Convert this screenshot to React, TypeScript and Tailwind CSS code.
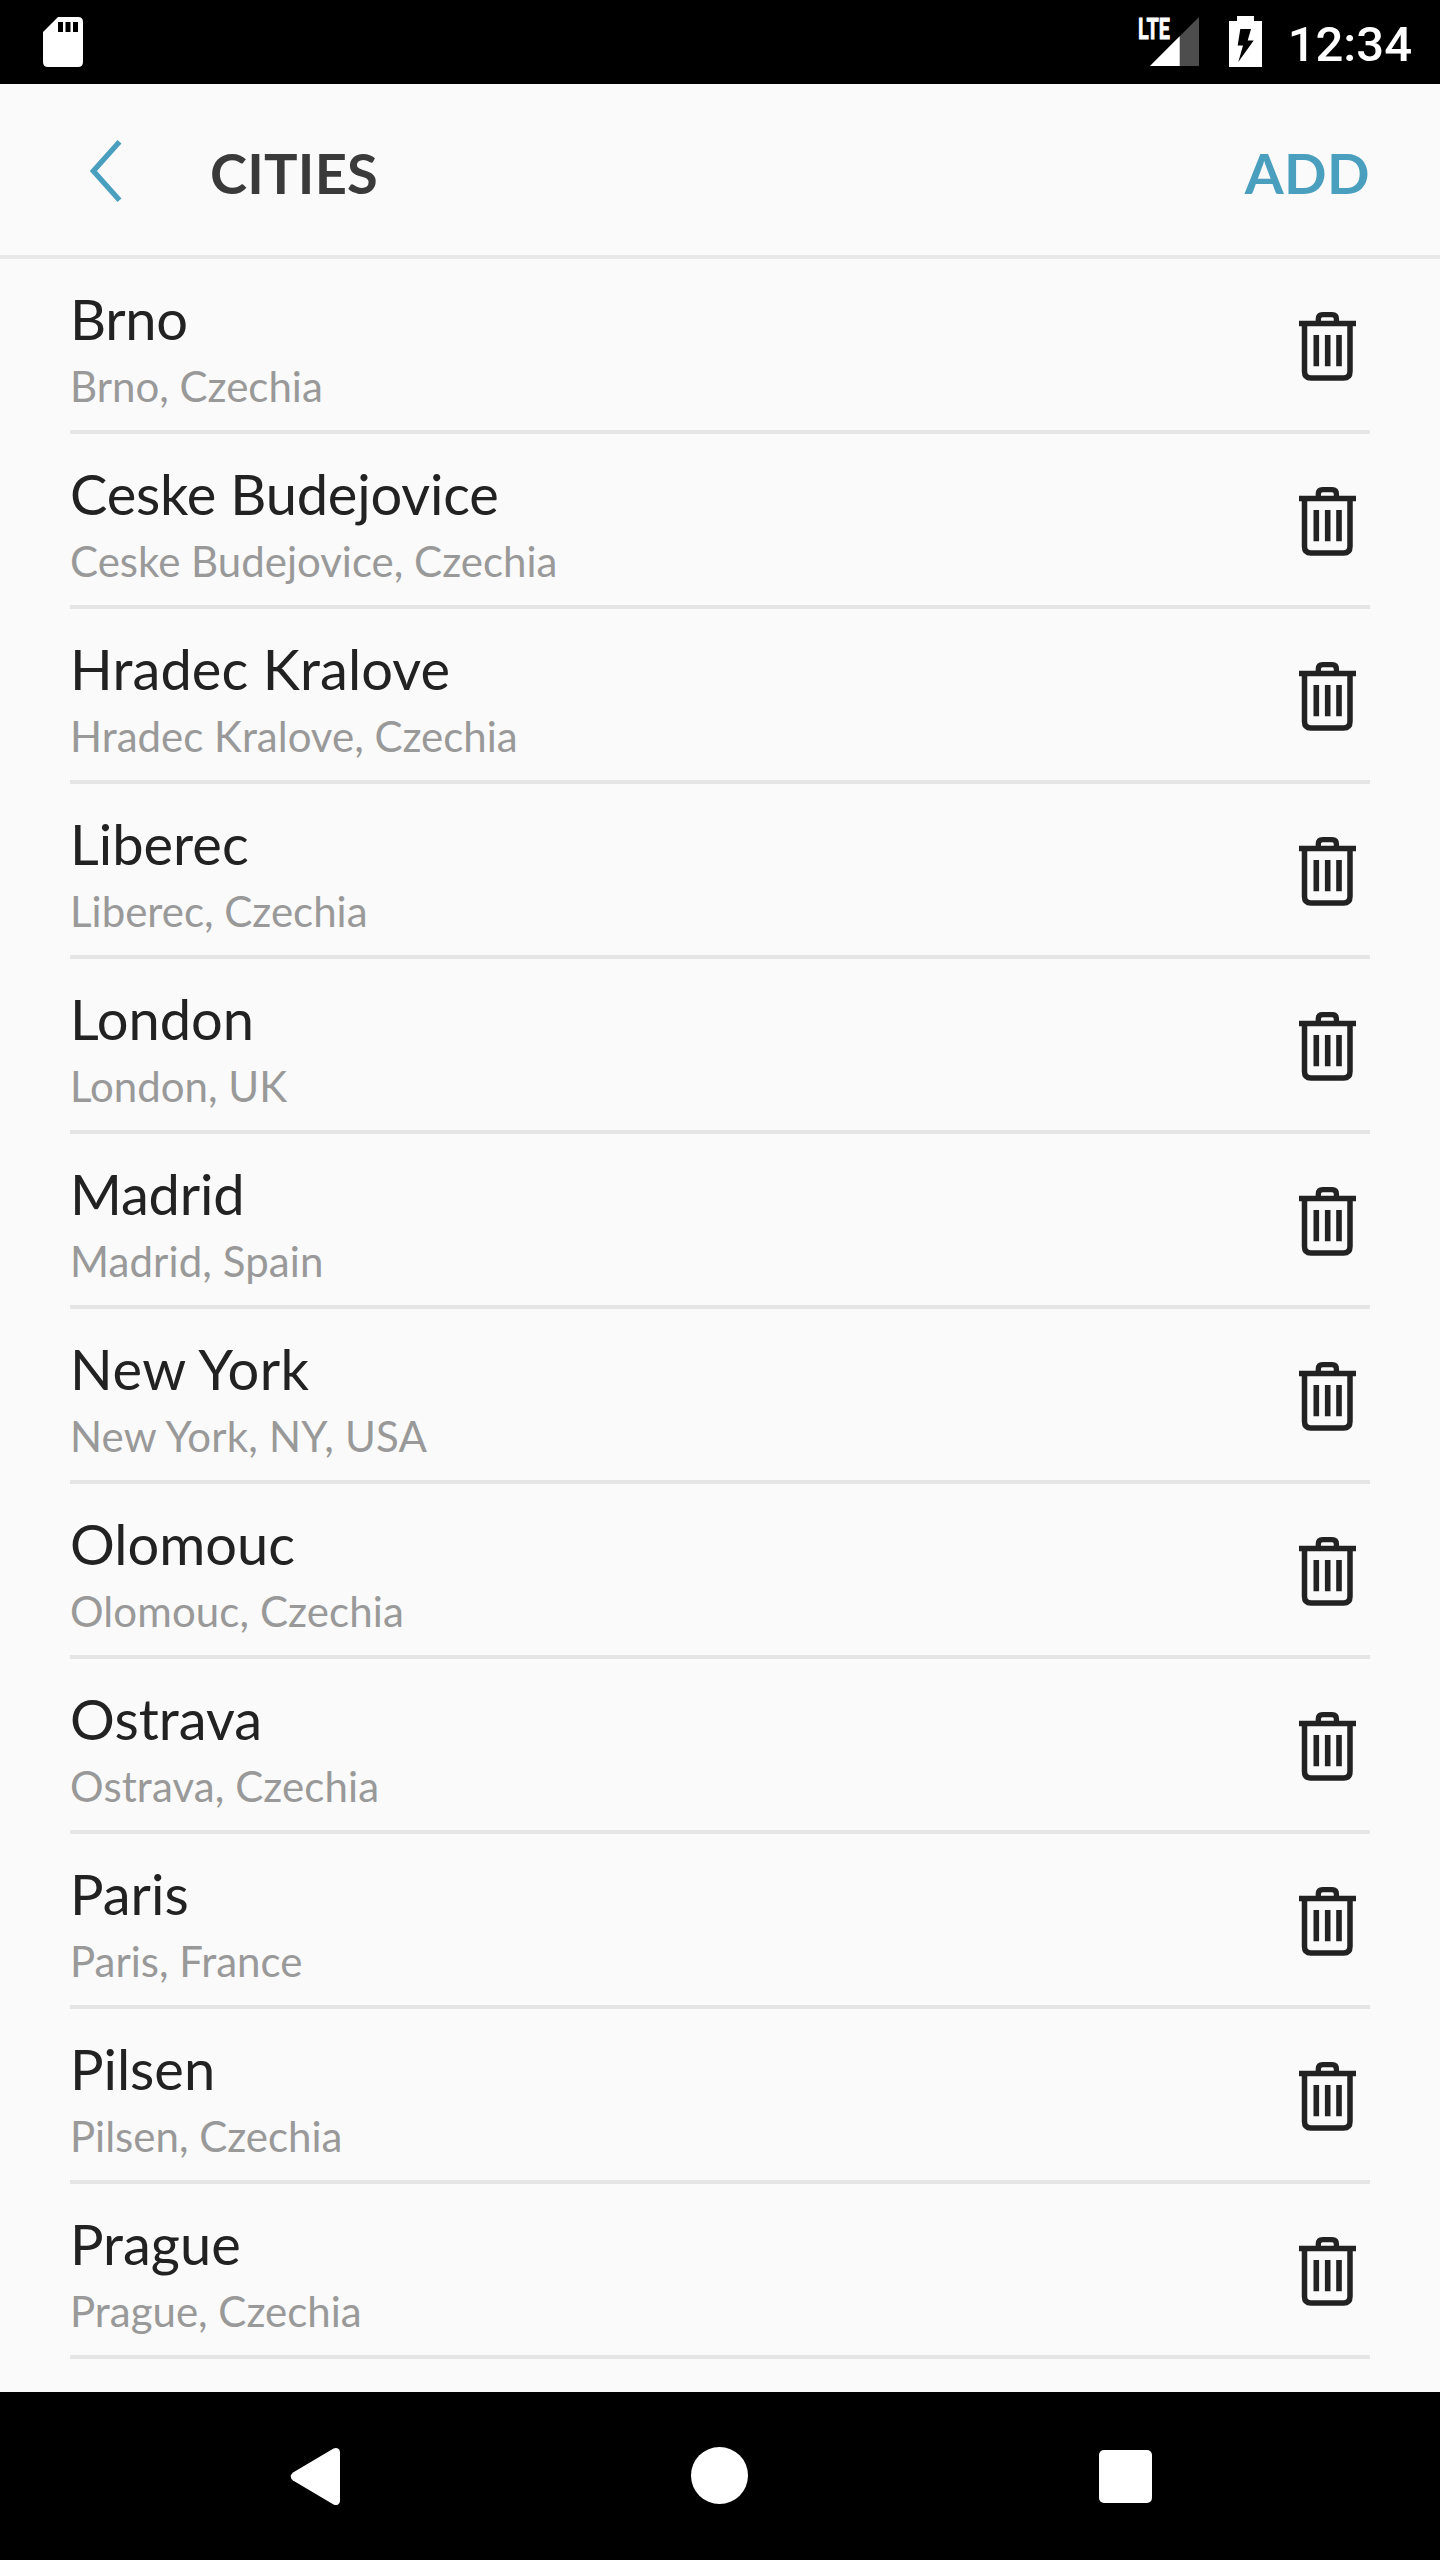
const cities = [
  { name: 'Brno', location: 'Brno, Czechia', nameSpacing: 'tracking-[-0.3px]' },
  { name: 'Ceske Budejovice', location: 'Ceske Budejovice, Czechia', nameSpacing: 'tracking-[-0.2px]' },
  { name: 'Hradec Kralove', location: 'Hradec Kralove, Czechia', nameSpacing: 'tracking-[0.1px]' },
  { name: 'Liberec', location: 'Liberec, Czechia' },
  { name: 'London', location: 'London, UK' },
  { name: 'Madrid', location: 'Madrid, Spain', nameSpacing: 'tracking-[-0.2px]', locationSpacing: 'tracking-[0.1px]' },
  {
    name: 'New York',
    location: 'New York, NY, USA',
    nameSpacing: 'tracking-[0.5px]',
    locationSpacing: 'tracking-[0.2px]',
  },
  { name: 'Olomouc', location: 'Olomouc, Czechia', locationSpacing: 'tracking-[0.1px]' },
  { name: 'Ostrava', location: 'Ostrava, Czechia', locationSpacing: 'tracking-[0.1px]' },
  { name: 'Paris', location: 'Paris, France' },
  { name: 'Pilsen', location: 'Pilsen, Czechia' },
  { name: 'Prague', location: 'Prague, Czechia' },
];

function TrashIcon() {
  return (
    <svg className="mt-[53px]" width="58" height="69" viewBox="0 0 58 69" fill="none" stroke="#222222">
      <path d="M19.300 10V7q0-4.300 4.300-4.300h9.500q4.300 0 4.300 4.300v3" strokeWidth="5.3" />
      <path d="M0 11.500H57" strokeWidth="5.700" />
      <path d="M5.500 13V59.500q0 6.500 6.500 6.500h32.500q6.500 0 6.500-6.500V13" strokeWidth="5.5" />
      <path d="M17.300 23V54.300M28.700 23V54.300M40 23V54.300" strokeWidth="5.6" />
    </svg>
  );
}

function StatusBar() {
  return (
    <div className="flex h-[84px] items-center justify-between bg-black pl-[43px] pr-[28px] text-white">
      <svg width="40" height="50" viewBox="0 0 40 50" fill="currentColor">
        <path
          fillRule="evenodd"
          d="M15 0h20q5 0 5 5v40q0 5-5 5H5q-5 0-5-5V15zM15 5v10h5V5zM22.500 5v10h5V5zM30 5v10h5V5z"
        />
      </svg>
      <div className="flex items-center">
        <svg className="overflow-visible" width="62" height="50" viewBox="0 0 62 50">
          <path d="M61 0V49H12z" fill="#4d4d4d" />
          <path d="M41.700 19.300V49H12z" fill="#ffffff" />
          <text
            x="0"
            y="22"
            textLength="32"
            lengthAdjust="spacingAndGlyphs"
            fill="#ffffff"
            stroke="#ffffff"
            strokeWidth="0.8"
            className="font-['Roboto'] text-[29px] font-bold"
          >
            LTE
          </text>
        </svg>
        <svg className="ml-[29px]" width="33" height="52" viewBox="0 0 33 52">
          <path d="M8 0h17v5h8v46H0V5h8z" fill="#ffffff" />
          <path d="M11.300 13H22L18.700 24.500H24.700L9.300 46L14 29.500H8.700z" fill="#000000" />
        </svg>
        <span className="ml-[26px] mt-[4px] font-['Roboto'] text-[49px] font-medium leading-none">12:34</span>
      </div>
    </div>
  );
}

function Header() {
  return (
    <header className="flex h-[175px] items-center border-b-4 border-[#e8e8e8] pl-[90px] pr-[70px]">
      <svg className="mt-[3px]" width="34" height="64" viewBox="0 0 34 64" fill="none" stroke="#4a9fbe" strokeWidth="5.3">
        <path d="M29.500 2.700L3.400 32L29.500 61.300" />
      </svg>
      <h1 className="ml-[86px] mt-[6px] text-[56px] font-bold leading-none tracking-[0.2px] text-[#3a3a3a]">CITIES</h1>
      <button className="ml-auto mt-[6px] text-[56px] font-bold leading-none tracking-[0.4px] text-[#4a9fbe]">ADD</button>
    </header>
  );
}

function NavigationBar() {
  return (
    <nav className="flex h-[168px] items-center bg-black pl-[290px] text-white">
      <svg width="50" height="58" viewBox="0 0 50 58" fill="currentColor">
        <path d="M43.500 1.500Q46 0.300 48 1.500Q50 2.800 50 5V54Q50 56.500 48 57.500Q46 58.500 43.500 57.500L3 33.500Q-1.500 29.500 3 25.500z" />
      </svg>
      <div className="ml-[351px] mb-px size-[57px] rounded-full bg-white" />
      <div className="ml-[351px] mt-px size-[53px] rounded-[5px] bg-white" />
    </nav>
  );
}

export default function App() {
  return (
    <div className="flex h-[2560px] w-[1440px] flex-col bg-[#fafafa] font-['Lato',sans-serif]">
      <StatusBar />
      <Header />

      {/* City list */}
      <ul className="flex-1 px-[70px]">
        {cities.map((city) => (
          <li
            key={city.name}
            className="flex h-[175px] items-start justify-between border-b-4 border-[#e5e5e5] pr-[13px]"
          >
            <div className="pt-[26px]">
              <p className={`text-[56px] leading-[67px] text-[#222222] ${city.nameSpacing ?? ''}`}>{city.name}</p>
              <p className={`text-[42px] leading-[69px] text-[#999999] ${city.locationSpacing ?? ''}`}>
                {city.location}
              </p>
            </div>
            <TrashIcon />
          </li>
        ))}
      </ul>

      <NavigationBar />
    </div>
  );
}
